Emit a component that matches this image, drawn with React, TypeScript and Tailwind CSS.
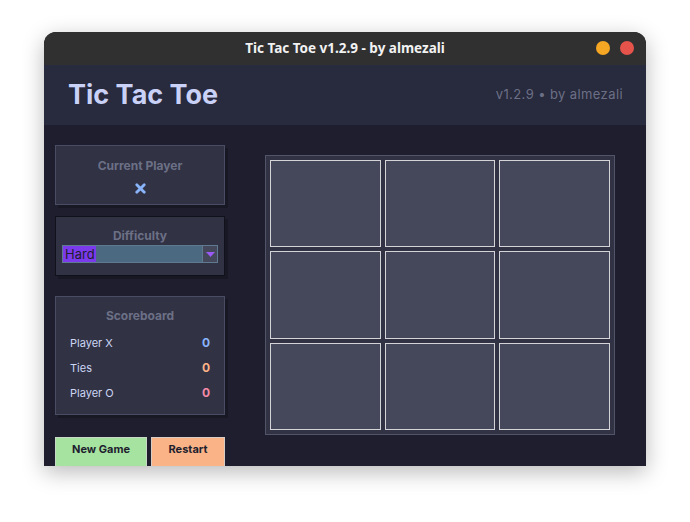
import { X } from "lucide-react";

const scores = [
  { label: "Player X", value: 0, color: "text-[#89b4fa]" },
  { label: "Ties", value: 0, color: "text-[#fab387]" },
  { label: "Player O", value: 0, color: "text-[#f38ba8]" },
];

export default function App() {
  return (
    <div className="min-h-screen bg-white flex justify-center pt-[32px] font-['Inter',sans-serif]">
      <div className="w-[602px] h-[434px] rounded-t-[12px] overflow-hidden bg-[#1e1e2e] shadow-[0_6px_22px_rgba(0,0,0,0.28)] flex flex-col">
        {/* Title bar */}
        <div className="h-[33px] shrink-0 bg-[#303030] relative flex items-center justify-center">
          <span className="text-[13.5px] font-bold text-[#f2f2f2] font-['Noto_Sans',sans-serif]">
            Tic Tac Toe v1.2.9 - by almezali
          </span>
          <div className="absolute right-[12px] top-[9px] flex gap-[10px]">
            <span className="w-[14px] h-[14px] rounded-full bg-[#f5a623]" />
            <span className="w-[14px] h-[14px] rounded-full bg-[#e5534b]" />
          </div>
        </div>

        {/* Header */}
        <div className="h-[60px] shrink-0 bg-[#282a3d] flex items-center justify-between pl-[24px] pr-[23px]">
          <h1 className="text-[27px] font-bold text-[#c9d1f7]">Tic Tac Toe</h1>
          <span className="text-[13px] tracking-[0.4px] text-[#6c7086]">v1.2.9 • by almezali</span>
        </div>

        {/* Body */}
        <div className="flex pl-[11px] pt-[20px]">
          <div className="w-[170px] flex flex-col">
            <div className="h-[60px] bg-[#313244] border border-[#4a4c63] shadow-[3px_3px_0_#181825] flex flex-col items-center pt-[11px]">
              <span className="text-[12px] font-bold text-[#6c7086]">Current Player</span>
              <X className="w-[15px] h-[15px] mt-[6px] text-[#89b4fa]" strokeWidth={4.5} />
            </div>

            <div className="h-[60px] mt-[11px] bg-[#313244] border border-[#11111b] shadow-[3px_3px_0_#181825] flex flex-col items-center pt-[10px]">
              <span className="text-[12px] font-bold text-[#6c7086]">Difficulty</span>
              <div className="w-[156px] h-[18px] flex border border-[#5d7a90] bg-[#4b6a82]">
                <div className="flex-1 flex items-center">
                  <span className="bg-[#7c3aed] text-[#1e1e2e] text-[13px] leading-[16px] pl-[2px] pr-[1px] w-[33px]">Hard</span>
                </div>
                <div className="w-[15px] border-l border-[#5d7a90] bg-[#45475a] flex items-center justify-center">
                  <svg width="9" height="5" viewBox="0 0 9 5">
                    <path d="M0 0h9L4.5 5z" fill="#9b59f5" />
                  </svg>
                </div>
              </div>
            </div>

            <div className="h-[119px] mt-[20px] bg-[#313244] border border-[#4a4c63] shadow-[3px_3px_0_#181825] flex flex-col pt-[10px] px-[14px]">
              <span className="text-[12px] font-bold text-[#6c7086] text-center">Scoreboard</span>
              <div className="mt-[10px] flex flex-col gap-[9px]">
                {scores.map((s) => (
                  <div key={s.label} className="flex items-center justify-between h-[16px]">
                    <span className="text-[11px] text-[#cdd6f4]">{s.label}</span>
                    <span className={`text-[12px] font-bold ${s.color}`}>{s.value}</span>
                  </div>
                ))}
              </div>
            </div>

            <div className="mt-[22px] flex gap-[4px]">
              <button className="w-[92px] h-[30px] bg-[#a6e3a1] border border-[#c8d8c6] text-[11px] font-bold text-[#1e1e2e] pb-[6px]">
                New Game
              </button>
              <button className="w-[74px] h-[30px] bg-[#fab387] border border-[#d8cdc6] text-[11px] font-bold text-[#1e1e2e] pb-[6px]">
                Restart
              </button>
            </div>
          </div>

          {/* Board */}
          <div className="ml-[40px] mt-[10px] w-[350px] h-[280px] bg-[#313244] border border-[#525468] p-[4px] grid grid-cols-3 grid-rows-3 gap-[4px]">
            {Array.from({ length: 9 }).map((_, i) => (
              <div key={i} className="bg-[#45475a] border border-[#d4d4d8]" />
            ))}
          </div>
        </div>
      </div>
    </div>
  );
}
